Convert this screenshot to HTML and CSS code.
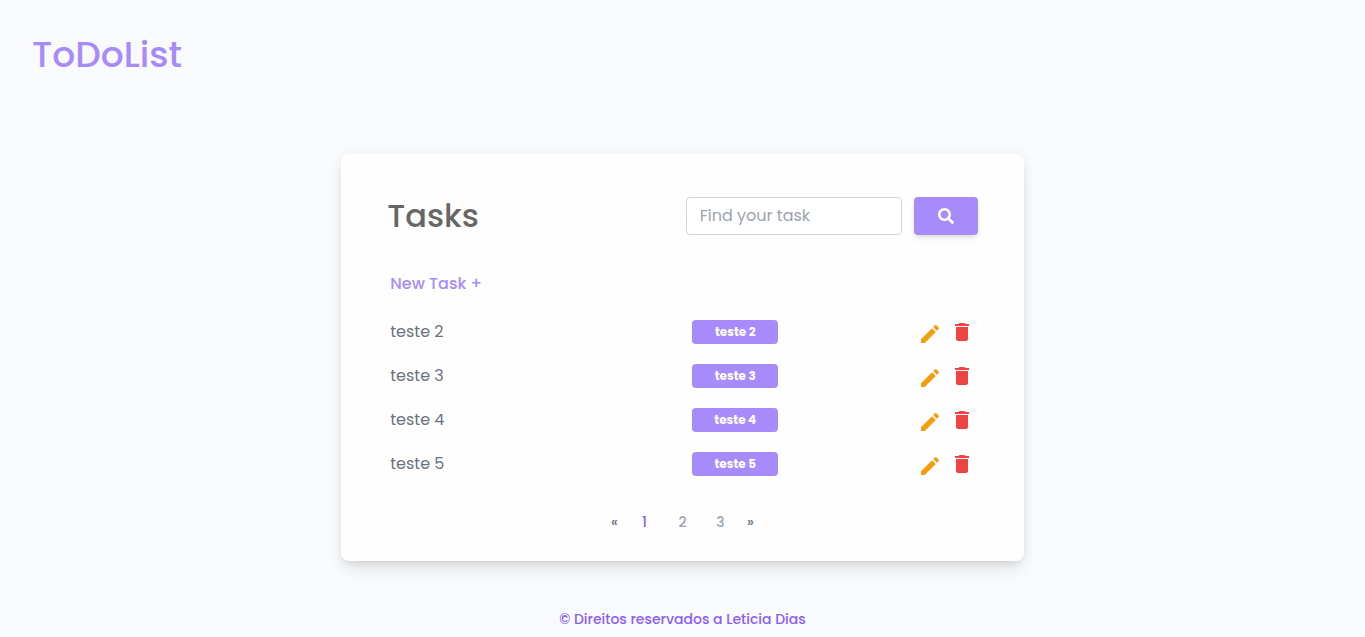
FILE: index.html
```html
<!DOCTYPE html>
<html lang="en">
<head>
<meta charset="utf-8">
<meta name="viewport" content="width=device-width, initial-scale=1">
<title>ToDoList</title>
<link rel="stylesheet" href="styles.css">
</head>
<body>
<svg class="symbols" aria-hidden="true">
  <symbol id="pencil" viewBox="0 0 24 24"><path d="M3 17.25V21h3.75L17.81 9.94l-3.75-3.75L3 17.25zM20.71 7.04a1 1 0 0 0 0-1.41l-2.34-2.34a1 1 0 0 0-1.41 0l-1.83 1.83 3.75 3.75 1.83-1.83z"/></symbol>
  <symbol id="trash" viewBox="0 0 24 24"><path d="M6 19c0 1.1.9 2 2 2h8c1.1 0 2-.9 2-2V7H6v12zM19 4h-3.5l-1-1h-5l-1 1H5v2h14V4z"/></symbol>
</svg>
<header class="header"><h1 class="brand">ToDoList</h1></header>
<main class="card">
  <div class="toolbar">
    <h2 class="title">Tasks</h2>
    <form class="search">
      <input class="search-input" type="text" placeholder="Find your task" aria-label="Find your task">
      <button class="search-button" type="button" aria-label="Search">
        <svg class="search-icon" viewBox="0 0 512 512" aria-hidden="true"><path d="M505 442.700 405.300 343c-4.500-4.500-10.600-7-17-7H372c27.600-35.300 44-79.700 44-128C416 93.100 322.900 0 208 0S0 93.100 0 208s93.100 208 208 208c48.300 0 92.700-16.400 128-44v16.300c0 6.400 2.500 12.500 7 17l99.700 99.700c9.400 9.400 24.600 9.400 33.900 0l28.300-28.300c9.400-9.400 9.400-24.600.1-34zM208 336c-70.700 0-128-57.200-128-128 0-70.700 57.200-128 128-128 70.700 0 128 57.200 128 128 0 70.700-57.200 128-128 128z"/></svg>
      </button>
    </form>
  </div>
  <a class="new-task" href="#">New Task +</a>
  <table class="tasks">
    <tbody>
      <tr><td class="name">teste 2</td><td class="tag-cell"><span class="tag">teste 2</span></td><td class="actions"><div class="action-list"><button class="action edit" type="button" aria-label="Edit teste 2"><svg class="icon"><use href="#pencil"/></svg></button><button class="action delete" type="button" aria-label="Delete teste 2"><svg class="icon"><use href="#trash"/></svg></button></div></td></tr>
      <tr><td class="name">teste 3</td><td class="tag-cell"><span class="tag">teste 3</span></td><td class="actions"><div class="action-list"><button class="action edit" type="button" aria-label="Edit teste 3"><svg class="icon"><use href="#pencil"/></svg></button><button class="action delete" type="button" aria-label="Delete teste 3"><svg class="icon"><use href="#trash"/></svg></button></div></td></tr>
      <tr><td class="name">teste 4</td><td class="tag-cell"><span class="tag">teste 4</span></td><td class="actions"><div class="action-list"><button class="action edit" type="button" aria-label="Edit teste 4"><svg class="icon"><use href="#pencil"/></svg></button><button class="action delete" type="button" aria-label="Delete teste 4"><svg class="icon"><use href="#trash"/></svg></button></div></td></tr>
      <tr><td class="name">teste 5</td><td class="tag-cell"><span class="tag">teste 5</span></td><td class="actions"><div class="action-list"><button class="action edit" type="button" aria-label="Edit teste 5"><svg class="icon"><use href="#pencil"/></svg></button><button class="action delete" type="button" aria-label="Delete teste 5"><svg class="icon"><use href="#trash"/></svg></button></div></td></tr>
    </tbody>
  </table>
  <nav class="pagination" aria-label="Pages">
    <a class="arrow" href="#" aria-label="Previous">«</a>
    <a class="page current" href="#" aria-current="page">1</a>
    <a class="page" href="#">2</a>
    <a class="page" href="#">3</a>
    <a class="arrow" href="#" aria-label="Next">»</a>
  </nav>
</main>
<footer class="footer">© Direitos reservados a Leticia Dias</footer>
</body>
</html>
```
FILE: styles.css
```css
* { box-sizing: border-box; }
body {
  margin: 0;
  background: #f9fafc;
  color: #6b7280;
  font-family: Poppins, Inter, sans-serif;
  font-size: 16px;
  line-height: 24px;
}
a { text-decoration: none; }
button { border: 0; cursor: pointer; }
.symbols { display: none; }
.header { padding: 32px; }
.brand {
  margin: 0;
  color: #a78bfa;
  font-size: 36px;
  line-height: 46px;
  font-weight: 500;
}
.card {
  width: 50%;
  min-width: 600px;
  margin: 44px auto 0;
  padding: 43px 46px 27px;
  border-radius: 8px;
  background: #fefefe;
  box-shadow: 0 10px 15px -3px rgba(0, 0, 0, .1), 0 4px 6px -2px rgba(0, 0, 0, .05), 0 0 12px rgba(0, 0, 0, .05);
}
.toolbar { display: flex; align-items: center; justify-content: space-between; }
.title { margin: 0; color: #666; font-size: 32px; line-height: 38px; font-weight: 500; }
.search { display: flex; gap: 12px; }
.search-input {
  width: 216px;
  height: 38px;
  padding: 0 13px 2px;
  border: 1px solid #d1d5db;
  border-radius: 4px;
  background: #fff;
  color: #6b7280;
  font: inherit;
}
.search-input::placeholder { color: #9ca3af; opacity: 1; }
.search-button {
  display: flex;
  align-items: center;
  justify-content: center;
  width: 64px;
  height: 38px;
  padding: 0;
  border-radius: 4px;
  background: #a78bfa;
  box-shadow: 0 4px 6px -1px rgba(0, 0, 0, .1), 0 2px 4px -1px rgba(0, 0, 0, .06);
}
.search-icon { width: 16px; height: 16px; fill: #fff; }
.new-task { display: block; width: fit-content; margin: 37px 3px 0; color: #a78bfa; font-weight: 500; }
.tasks { width: 100%; margin-top: 14px; border-collapse: collapse; table-layout: fixed; }
.tasks td { height: 44px; padding: 0; vertical-align: middle; }
.tasks .name { width: 305px; padding-left: 3px; }
.tag {
  display: block;
  width: 86px;
  border-radius: 4px;
  background: #a78bfa;
  color: #fff;
  font-size: 12px;
  font-weight: 700;
  text-align: center;
}
.action-list { display: flex; align-items: center; justify-content: flex-end; gap: 8px; padding-right: 4px; }
.action { display: flex; padding: 0; background: none; }
.edit { color: #f59e0b; padding-top: 4px; }
.delete { color: #ef4444; }
.icon { width: 24px; height: 24px; fill: currentColor; }
.pagination {
  display: flex;
  align-items: center;
  justify-content: center;
  margin-top: 24px;
  font-size: 14px;
  font-weight: 500;
}
.page { width: 38px; color: #9ca3af; text-align: center; }
.current { color: #8b5cf6; }
.arrow { width: 22px; color: #6b7280; text-align: center; }
.footer { padding: 46px 0 6px; color: #8b5cf6; font-size: 14px; font-weight: 500; text-align: center; }
```
